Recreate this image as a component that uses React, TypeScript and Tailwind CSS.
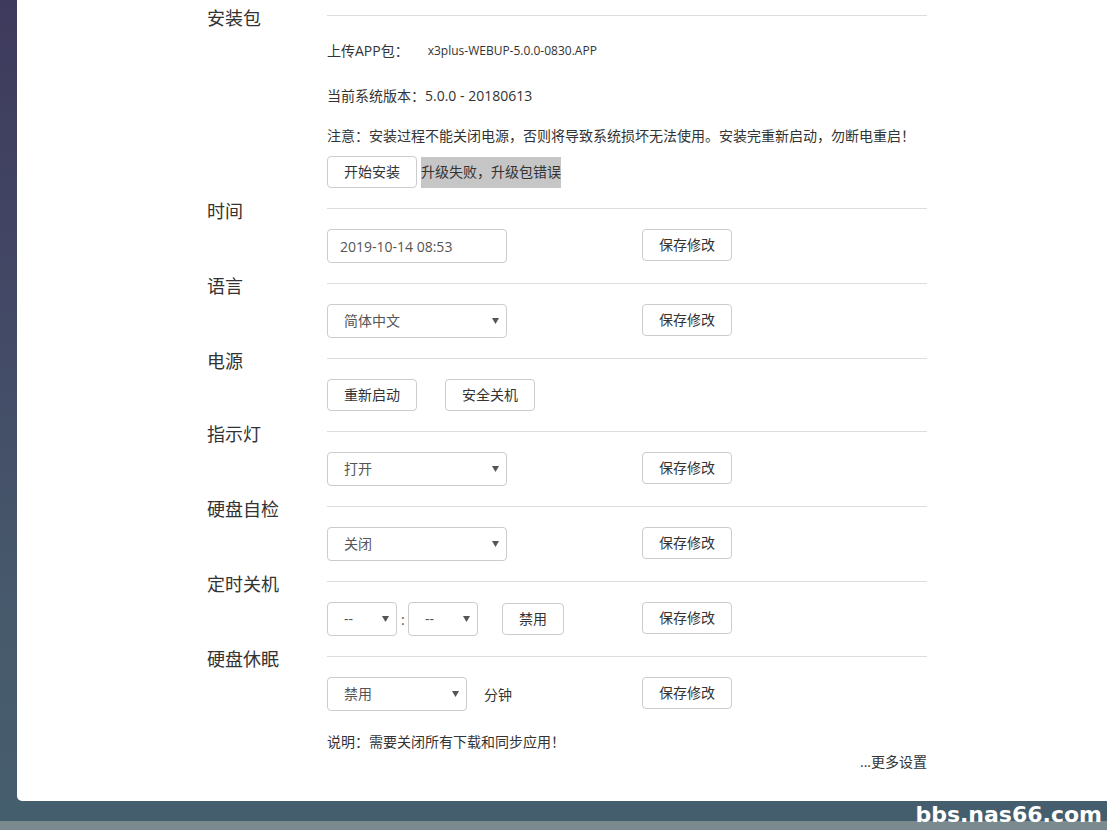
import React from "react";

const FONT = "font-['Open_Sans','Noto_Sans_CJK_SC',sans-serif]";

function Btn({ children, w = "w-[90px]" }: { children: React.ReactNode; w?: string }) {
  return (
    <div className={`${w} h-[32px] shrink-0 border border-[#cccccc] rounded-[4px] bg-white flex items-center justify-center text-[14px] leading-[20px] text-[#333]`}>
      {children}
    </div>
  );
}

function Arrow() {
  return (
    <svg width="7" height="6" viewBox="0 0 7 6" className="shrink-0">
      <polygon points="0,0 7,0 3.5,6" fill="#555" />
    </svg>
  );
}

function Sel({ value, w }: { value: string; w: string }) {
  return (
    <div className={`${w} h-[34px] shrink-0 border border-[#cccccc] rounded-[4px] bg-white flex items-center justify-between pl-[16px] pr-[7px] text-[14px] leading-[20px] text-[#555]`}>
      <span>{value}</span>
      <Arrow />
    </div>
  );
}

function Section({ label, children }: { label: string; children: React.ReactNode }) {
  return (
    <div className="grid grid-cols-[120px_1fr]">
      <div className="text-[18px] leading-[22px] text-[#333]">{label}</div>
      <div className="mt-[8px] border-t border-[#dddddd] pt-[20px]">{children}</div>
    </div>
  );
}

function Row({ left, save = true }: { left: React.ReactNode; save?: boolean }) {
  return (
    <div className="flex items-start">
      <div className="w-[315px] flex items-center shrink-0">{left}</div>
      {save && <Btn>保存修改</Btn>}
    </div>
  );
}

export default function App() {
  return (
    <div className={`relative w-[1107px] h-[830px] overflow-hidden bg-[linear-gradient(180deg,#3e3a5d_0%,#434a66_40%,#475a6c_75%,#465e6e_100%)] ${FONT}`}>
      <div className="flex flex-col h-full">
        <div className="ml-[17px] h-[801px] bg-white rounded-bl-[5px] pl-[190px] pt-[7px]">
          <div className="w-[720px] flex flex-col gap-[12px]">
            <div className="grid grid-cols-[120px_1fr]">
              <div className="text-[18px] leading-[22px] text-[#333]">安装包</div>
              <div className="mt-[8px] border-t border-[#dddddd] pt-[25px] text-[14px] leading-[20px] text-[#333]">
                <div className="flex items-center h-[20px]">
                  <span>上传APP包：</span>
                  <span className="ml-[19px] text-[12px] text-[#333]">x3plus-WEBUP-5.0.0-0830.APP</span>
                </div>
                <div className="mt-[25px] h-[20px]">当前系统版本：5.0.0 - 20180613</div>
                <div className="mt-[20px] h-[20px]">注意：安装过程不能关闭电源，否则将导致系统损坏无法使用。安装完重新启动，勿断电重启！</div>
                <div className="mt-[10px] flex items-center gap-[4px]">
                  <Btn>开始安装</Btn>
                  <div className="h-[31px] w-[140px] bg-[#c6c6c6] flex items-center text-[14px] text-[#333]">升级失败，升级包错误</div>
                </div>
              </div>
            </div>

            <Section label="时间">
              <Row
                left={
                  <div className="w-[180px] h-[34px] border border-[#cccccc] rounded-[4px] flex items-center pl-[12px] text-[14px] text-[#555]">
                    2019-10-14 08:53
                  </div>
                }
              />
            </Section>

            <Section label="语言">
              <Row left={<Sel value="简体中文" w="w-[180px]" />} />
            </Section>

            <Section label="电源">
              <div className="flex gap-[28px]">
                <Btn>重新启动</Btn>
                <Btn>安全关机</Btn>
              </div>
            </Section>

            <Section label="指示灯">
              <Row left={<Sel value="打开" w="w-[180px]" />} />
            </Section>

            <Section label="硬盘自检">
              <Row left={<Sel value="关闭" w="w-[180px]" />} />
            </Section>

            <Section label="定时关机">
              <Row
                left={
                  <>
                    <Sel value="--" w="w-[70px]" />
                    <span className="mx-[4px] w-[3px] text-[14px] text-[#555]">:</span>
                    <Sel value="--" w="w-[70px]" />
                    <div className="ml-[24px]">
                      <Btn w="w-[62px]">禁用</Btn>
                    </div>
                  </>
                }
              />
            </Section>

            <Section label="硬盘休眠">
              <Row
                left={
                  <>
                    <Sel value="禁用" w="w-[140px]" />
                    <span className="ml-[17px] text-[14px] text-[#333]">分钟</span>
                  </>
                }
              />
              <div className="mt-[21px] text-[14px] leading-[20px] text-[#333]">说明：需要关闭所有下载和同步应用！</div>
              <div className="text-right text-[14px] leading-[20px] text-[#333]">...更多设置</div>
            </Section>
          </div>
        </div>
        <div className="h-[20px] bg-[#455e6e]" />
        <div className="flex-1 bg-[#7a8a8f]" />
      </div>
      <div className="absolute right-[5px] bottom-[3px] text-white text-[22px] leading-[24px] font-bold font-['DejaVu_Sans',sans-serif]">
        bbs.nas66.com
      </div>
    </div>
  );
}
